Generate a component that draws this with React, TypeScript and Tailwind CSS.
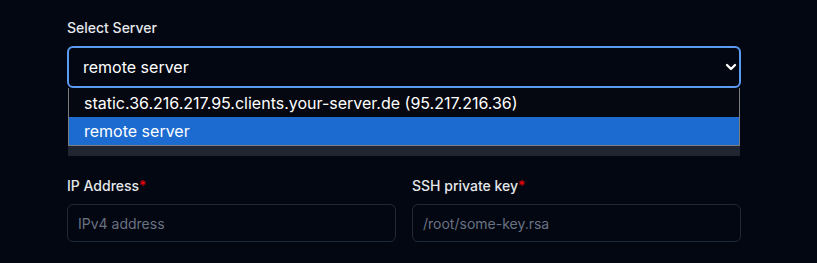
import { ChevronDown } from 'lucide-react';

const font = { fontFamily: 'Inter, "Noto Sans", sans-serif' };

export default function App() {
  return (
    <div className="h-[263px] w-full bg-[#030712] pt-[18px] text-gray-100" style={font}>
      <div className="ml-[67px] w-[674px]">
        <label className="mb-2 block text-sm leading-5 font-medium text-gray-200">Select Server</label>
        <div className="relative">
          <div className="flex h-[42px] items-center justify-between rounded-md border-2 border-[#5b9bf2] bg-[#030712] pr-0 pl-[14px] text-base text-white">
            <span>remote server</span>
            <ChevronDown className="h-4 w-4" strokeWidth={3.5} />
          </div>
          {/* native select popup */}
          <div className="absolute top-[42px] right-px left-px z-10">
            <div className="border border-t-0 border-[#7d7d7d] bg-[#050810] text-base text-white">
              <div className="flex h-[29px] items-center pl-[15px]">
                static.36.216.217.95.clients.your-server.de (95.217.216.36)
              </div>
              <div className="flex h-[28px] items-center bg-[#1c6bd0] pl-[15px]">remote server</div>
            </div>
            <div className="h-[10px] bg-[#1f2531]" />
          </div>
        </div>

        <div className="mt-[88px] grid grid-cols-2 gap-4">
          <div>
            <label className="mb-2 block text-sm leading-5 font-medium text-gray-200">
              IP Address<span className="text-red-600">*</span>
            </label>
            <input
              className="block h-[38px] w-full rounded-md border border-gray-800 bg-transparent px-[10px] text-sm text-gray-100 placeholder:text-gray-500"
              placeholder="IPv4 address"
            />
          </div>
          <div>
            <label className="mb-2 block text-sm leading-5 font-medium text-gray-200">
              SSH private key<span className="text-red-600">*</span>
            </label>
            <input
              className="block h-[38px] w-full rounded-md border border-gray-800 bg-transparent px-[10px] text-sm text-gray-100 placeholder:text-gray-500"
              placeholder="/root/some-key.rsa"
            />
          </div>
        </div>
      </div>
    </div>
  );
}
